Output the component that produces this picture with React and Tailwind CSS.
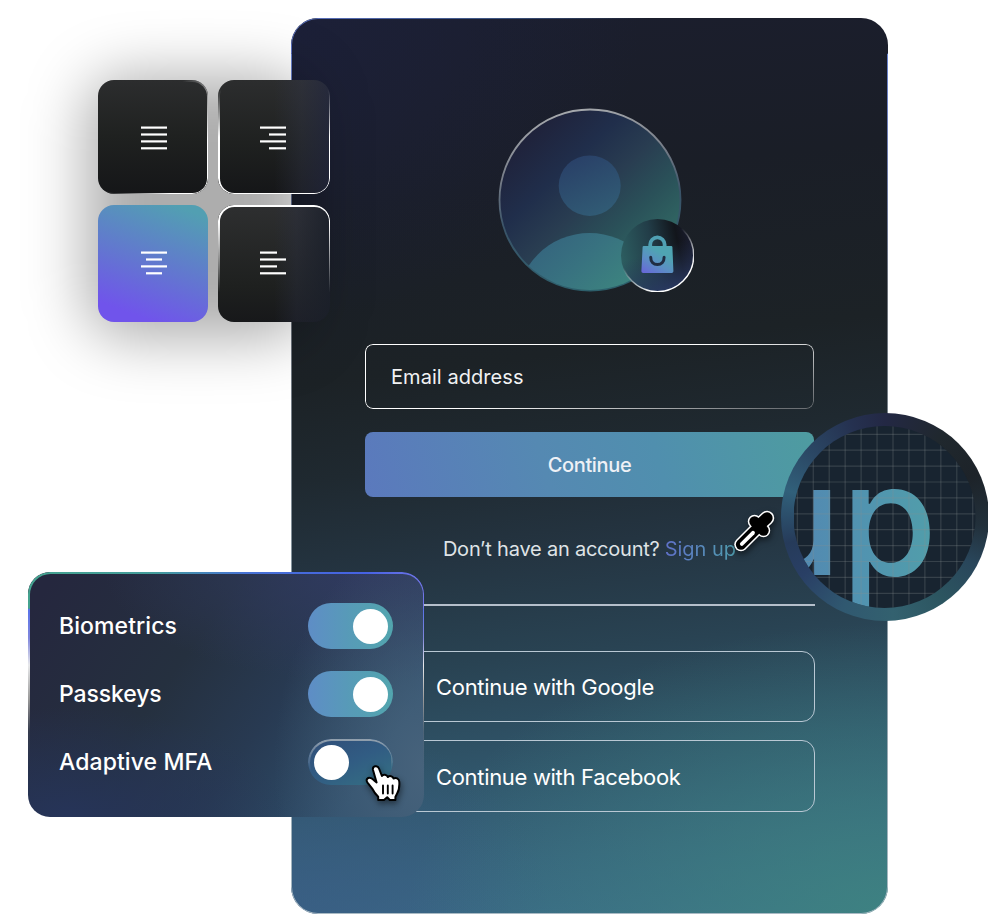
import React from "react";

const RING =
  "pointer-events-none absolute inset-0 rounded-[inherit] p-[1.5px] [mask:linear-gradient(#000_0_0)_content-box_exclude,linear-gradient(#000_0_0)]";

function AlignIcon({ lines }) {
  return (
    <svg width="26" height="24" viewBox="0 0 26 24" fill="#fff">
      {lines.map(([x, w], i) => (
        <rect key={i} x={x} y={0.5 + i * 6.9} width={w} height="2.2" />
      ))}
    </svg>
  );
}

function AlignTiles() {
  return (
    <div className="absolute left-[98px] top-[80px] z-10 h-[242px] w-[232px]">
      <div className="absolute -bottom-4 -left-3 right-5 -top-1 rounded-[40px] bg-black/32 blur-[30px]" />
      <div className="relative grid h-full grid-cols-[110px_112px] grid-rows-[114px_117px] gap-x-2.5 gap-y-[11px]">
        <div className="relative flex items-center justify-center rounded-2xl bg-linear-to-b from-[#2c2d2e] via-[#1f2120] to-[#151618] pl-0.5 pt-0.5">
          <AlignIcon lines={[[0, 26], [0, 26], [0, 26], [0, 26]]} />
          <div className={`${RING} bg-[linear-gradient(125deg,#fff0_45%,#fff_80%)]`} />
        </div>
        <div className="relative flex items-center justify-center rounded-2xl bg-[linear-gradient(90deg,#0000_50%,#33384f55_75%,#232843aa),linear-gradient(180deg,#2c2d2e,#1f2120_55%,#151618)] pr-0.5 pt-0.5">
          <AlignIcon lines={[[0, 26], [9, 17], [0, 26], [9, 17]]} />
          <div className={`${RING} bg-[linear-gradient(180deg,#fff0_8%,#fff_50%)]`} />
        </div>
        <div className="flex items-center justify-center rounded-2xl bg-[linear-gradient(200deg,#529fb2_8%,#6375d1_53%,#7054eb_87%)] pb-0.5 pl-0.5">
          <AlignIcon lines={[[0, 26], [5, 16], [0, 26], [5, 16]]} />
        </div>
        <div className="relative flex items-center justify-center rounded-2xl bg-[linear-gradient(90deg,#0000_50%,#2b304655_70%,#1b202bdd),linear-gradient(180deg,#2e2f30,#1e201f_70%,#17181a)] pb-0.5 pr-0.5">
          <AlignIcon lines={[[0, 17], [0, 26], [0, 17], [0, 26]]} />
          <div className={`${RING} bg-[linear-gradient(180deg,#fff_15%,#fff0_75%)]`} />
        </div>
      </div>
    </div>
  );
}

function Avatar() {
  return (
    <svg className="-mr-3 shrink-0" width="196" height="184" viewBox="498 108 196 184">
      <defs>
        <linearGradient id="face" x1="0.1" y1="0.15" x2="0.85" y2="0.95">
          <stop offset="0" stopColor="#1f2139" />
          <stop offset="0.28" stopColor="#202e4b" />
          <stop offset="0.48" stopColor="#293d51" />
          <stop offset="0.68" stopColor="#2a5159" />
          <stop offset="1" stopColor="#347268" />
        </linearGradient>
        <linearGradient id="rim" x1="0.4" y1="0" x2="0.6" y2="1">
          <stop offset="0" stopColor="#a6a9ad" />
          <stop offset="0.3" stopColor="#777d88" />
          <stop offset="0.55" stopColor="#3a5368" />
          <stop offset="1" stopColor="#2c5f6b" />
        </linearGradient>
        <linearGradient id="head" x1="0.2" y1="0" x2="0.7" y2="1">
          <stop offset="0" stopColor="#293f67" />
          <stop offset="1" stopColor="#315c75" />
        </linearGradient>
        <linearGradient id="body" x1="0.1" y1="0" x2="0.6" y2="0.55">
          <stop offset="0" stopColor="#34607d" />
          <stop offset="0.5" stopColor="#387280" />
          <stop offset="1" stopColor="#3d867f" />
        </linearGradient>
        <linearGradient id="badge" x1="0" y1="0.6" x2="1" y2="0.4">
          <stop offset="0" stopColor="#2d5e61" />
          <stop offset="0.45" stopColor="#223d48" />
          <stop offset="0.8" stopColor="#12151b" />
          <stop offset="1" stopColor="#1a1d30" />
        </linearGradient>
        <linearGradient id="badgeLow" x1="0.4" y1="0.45" x2="0.6" y2="1">
          <stop offset="0" stopColor="#253252" stopOpacity="0" />
          <stop offset="1" stopColor="#293863" stopOpacity="0.9" />
        </linearGradient>
        <linearGradient id="badgeRim" x1="0.15" y1="0.2" x2="0.65" y2="0.95">
          <stop offset="0.35" stopColor="#fff" stopOpacity="0" />
          <stop offset="0.9" stopColor="#fff" />
        </linearGradient>
        <linearGradient id="bag" x1="0.8" y1="0" x2="0.1" y2="1">
          <stop offset="0.25" stopColor="#4fa4b2" />
          <stop offset="0.6" stopColor="#5b8fc4" />
          <stop offset="1" stopColor="#6769d8" />
        </linearGradient>
        <clipPath id="faceClip">
          <circle cx="590" cy="200" r="90" />
        </clipPath>
      </defs>
      <circle cx="590" cy="200" r="90.5" fill="url(#face)" stroke="url(#rim)" strokeWidth="1.8" />
      <ellipse cx="589.7" cy="185.700" rx="31" ry="30.200" fill="url(#head)" />
      <circle cx="589.5" cy="306" r="73" fill="url(#body)" clipPath="url(#faceClip)" />
      <circle cx="657.500" cy="255.5" r="36.5" fill="url(#badge)" />
      <circle cx="657.500" cy="255.5" r="36.2" fill="url(#badgeLow)" stroke="url(#badgeRim)" strokeWidth="1.4" />
      <path d="M650.2 248v-3.4a7.2 7.2 0 0 1 14.4 0v3.4" fill="none" stroke="#50a0b3" strokeWidth="3.8" />
      <path d="M643.8 246h27.4a1.2 1.2 0 0 1 1.2 1.1l1 24a1.7 1.7 0 0 1-1.7 1.8h-28.6a1.7 1.7 0 0 1-1.7-1.8l1.2-24a1.2 1.2 0 0 1 1.2-1.1z" fill="url(#bag)" />
      <path d="M650.7 257.200c0 4.800 2.800 7.300 6.700 7.300s6.700-2.500 6.700-7.300" fill="none" stroke="#202d43" strokeWidth="3" strokeLinecap="round" />
    </svg>
  );
}

function LoginCard() {
  return (
    <div className="relative ml-[291px] mt-[18px] flex h-[896px] w-[597px] flex-col items-stretch rounded-[27px] bg-[radial-gradient(ellipse_480px_290px_at_100%_100%,#3e8580dd,#3e858000),radial-gradient(ellipse_350px_300px_at_0%_0%,#1c2038,#1c203800),radial-gradient(ellipse_260px_200px_at_0%_100%,#3a5c86aa,#3a5c8600),linear-gradient(173deg,#1b1e2e_0%,#1a1e27_20%,#1c2226_38%,#1f2930_48%,#243441_58%,#294353_69%,#30556a_80%,#37627d_90%,#3c6d8c_100%)] px-[74px] pt-[90px]">
      <div className={`${RING} !p-px bg-[linear-gradient(90deg,#5c72c0_0%,#3c5480_35%,#fff0_60%)] [clip-path:inset(0_0_96%_0)]`} />
      <div className={`${RING} !p-px bg-[linear-gradient(180deg,#6483d8_0%,#6d80c0_10%,#6b7078_30%,#8b9aa4_65%,#a9bac4_100%)] [clip-path:inset(4%_0_0_0)]`} />
      <div className="flex justify-center">
        <Avatar />
      </div>
      <div className="relative mt-[52px] flex h-[65px] shrink-0 items-center rounded-lg pl-[26px] pt-px text-xl text-[#f1f2f3]">
        <div className={`${RING} !p-[1.2px] bg-[linear-gradient(165deg,#fff_50%,#6c7074_95%)]`} />
        <span className="tracking-[0.06px]">Email address</span>
      </div>
      <div className="mt-[23px] flex h-[65px] shrink-0 items-center justify-center rounded-lg bg-[linear-gradient(75deg,#5b79bd,#5589b2_40%,#508fae_65%,#4e9ca0)] text-xl font-medium tracking-[-0.35px] text-[#eef1f6]">
        Continue
      </div>
      <div className="mt-[38px] flex h-7 shrink-0 items-center justify-center gap-[5px] whitespace-nowrap text-xl text-[#dfe3e6]">
        <span className="tracking-[-0.22px]">Don’t have an account?</span>
        <span className="bg-linear-to-r from-[#5f70c8] to-[#4f9dae] bg-clip-text text-transparent">Sign up</span>
      </div>
      <div className="-mr-px mt-[41px] h-[1.5px] shrink-0 bg-[#b5bfcb]" />
      <div className="-mr-px mt-[45px] flex h-[71px] shrink-0 items-center rounded-[13px] border-[1.5px] border-[#b9c8d4] pl-[70px] pt-0.5 text-[22px] tracking-[-0.3px] text-white">
        Continue with Google
      </div>
      <div className="-mr-px mt-[18.500px] flex h-[72px] shrink-0 items-center rounded-[13px] border-[1.5px] border-[#b9c8d4] pl-[70px] pt-0.5 text-[22px] tracking-[-0.32px] text-white">
        Continue with Facebook
      </div>
    </div>
  );
}

function Toggle({ on }) {
  return on ? (
    <div className="flex h-[46px] w-[85px] items-center justify-end rounded-full bg-linear-to-r from-[#5e8dc6] via-[#579bb7] to-[#52a5ae] pr-[5px]">
      <div className="size-[35px] rounded-full bg-white" />
    </div>
  ) : (
    <div className="relative flex h-[46px] w-[85px] items-center rounded-full bg-[linear-gradient(155deg,#30507a_10%,#315c83_50%,#357183)] pl-1.5">
      <div className={`${RING} bg-[linear-gradient(180deg,#93a1ae,#93a1ae00_70%)]`} />
      <div className="size-[35px] rounded-full bg-white" />
    </div>
  );
}

function SettingsPanel() {
  const rows = [
    ["Biometrics", "tracking-[0.08px]", true],
    ["Passkeys", "tracking-[-0.12px]", true],
    ["Adaptive MFA", "tracking-[0.08px]", false],
  ];
  return (
    <div className="absolute left-[28px] top-[572px] z-10 flex h-[245px] w-[396px] flex-col gap-[22px] rounded-[22px] bg-[radial-gradient(ellipse_150px_230px_at_100%_80%,#4d6880cc,#4d688000),radial-gradient(ellipse_260px_110px_at_85%_0%,#303a5f,#303a5f00),radial-gradient(ellipse_220px_110px_at_10%_100%,#263459,#26345900),linear-gradient(125deg,#25273e_5%,#25303f_38%,#283a52_60%,#2e4e6b_85%)] pl-[31px] pr-[31.500px] pt-[31px]">
      <div className={`${RING} bg-[linear-gradient(180deg,#0000_14%,#5872e9_15%,#8087dc_27%,#e8e9eb_38%,#999_52%,#7773_65%,#7770_80%)]`} />
      <div className={`${RING} bg-[linear-gradient(90deg,#45a38f,#439c9b_32%,#4772d5_55%,#4662e3_85%,#7075e6)] [clip-path:inset(0_0_85%_0)]`} />
      {rows.map(([label, tracking, on]) => (
        <div key={label} className="flex h-[46px] shrink-0 items-center justify-between">
          <span className={`text-[23px] font-medium text-white ${tracking}`}>{label}</span>
          <Toggle on={on} />
        </div>
      ))}
    </div>
  );
}

function Magnifier() {
  const marks = [...Array(12).keys()];
  return (
    <div className="absolute left-[781px] top-[413px] z-10 flex size-[208px] items-center justify-center rounded-full bg-[conic-gradient(#232844,#20282e_35deg,#1d2329_65deg,#22303b_95deg,#29465b_118deg,#2c5560_145deg,#33616f_175deg,#305870_205deg,#293f65_235deg,#263b5a_255deg,#31607a_285deg,#2b4865_310deg,#253150_340deg,#232844)]">
      <svg width="182" height="182" viewBox="794 426 182 182">
        <defs>
          <clipPath id="lens">
            <circle cx="884.500" cy="517" r="91" />
          </clipPath>
          <linearGradient id="up" gradientUnits="userSpaceOnUse" x1="800" y1="0" x2="935" y2="0">
            <stop offset="0" stopColor="#5389b1" />
            <stop offset="0.45" stopColor="#5193b0" />
            <stop offset="1" stopColor="#519eaa" />
          </linearGradient>
        </defs>
        <g clipPath="url(#lens)">
          <rect x="794" y="426" width="182" height="182" fill="#182430" />
          <text x="748" y="575" fontFamily="Inter, sans-serif" fontWeight="500" fontSize="155" fill="url(#up)">
            up
          </text>
          <g stroke="#8a9090" strokeOpacity="0.27" strokeWidth="1.2">
            {marks.map((i) => (
              <React.Fragment key={i}>
                <path d={`M${797.3 + i * 15.95} 426v182`} />
                <path d={`M794 ${434.3 + i * 15.9}h182`} />
              </React.Fragment>
            ))}
          </g>
        </g>
      </svg>
    </div>
  );
}

function Eyedropper() {
  return (
    <svg className="absolute left-[730px] top-[506px] z-20 drop-shadow-[1px_3px_3px_#0008]" width="48" height="50" viewBox="730 506 48 50">
      <g strokeLinecap="round" strokeLinejoin="round">
        <g stroke="#fff">
          <path d="M741 544.500L757 528.500" strokeWidth="13.500" />
          <path d="M754.500 521.500L763.500 530.500" strokeWidth="13.500" />
          <path d="M760 524.500L767 518" strokeWidth="14.500" />
        </g>
        <g stroke="#000">
          <path d="M741 544.500L757 528.500" strokeWidth="10.300" />
          <path d="M754.500 521.500L763.500 530.500" strokeWidth="10.400" />
          <path d="M760 524.500L767 518" strokeWidth="11.300" />
        </g>
        <path d="M741.800 544L753 532.800" stroke="#fff" strokeWidth="3.800" />
      </g>
    </svg>
  );
}

function HandCursor() {
  return (
    <svg className="absolute left-[362px] top-[760px] z-20 drop-shadow-[1px_3px_3px_#0007]" width="44" height="46" viewBox="362 760 44 46">
      <path
        d="M378.200 800v-3.200c-2.200-2-4.400-5-6.200-8.500l-4.500-5.700c-2.200-3 .4-5.800 3.500-4.500c2 .9 3.600 2.900 5.600 4.400l-3.600-12.500c-.9-4 4.600-5.300 6-1.500l2.900 7.500c1.300-2 4.800-1.700 6 1c1.500-1.600 4.800-1.100 5.600 1.500c2.200-1.200 5.600 0 5.800 3.300c.3 4.700-.3 9-2.300 12l-1.600 3.200v3h-5.600l-2.600-2.800l-3.200 2.800z"
        fill="#fff"
        stroke="#000"
        strokeWidth="2"
        strokeLinejoin="round"
      />
      <path d="M383 785.500v8M387.800 785.500v8M392.600 785.500v8" stroke="#000" strokeWidth="1.900" strokeLinecap="round" />
    </svg>
  );
}

export default function App() {
  return (
    <div className="relative flex h-[915px] w-[988px] items-start overflow-hidden bg-white font-['Inter',sans-serif]">
      <LoginCard />
      <AlignTiles />
      <SettingsPanel />
      <Magnifier />
      <Eyedropper />
      <HandCursor />
    </div>
  );
}
